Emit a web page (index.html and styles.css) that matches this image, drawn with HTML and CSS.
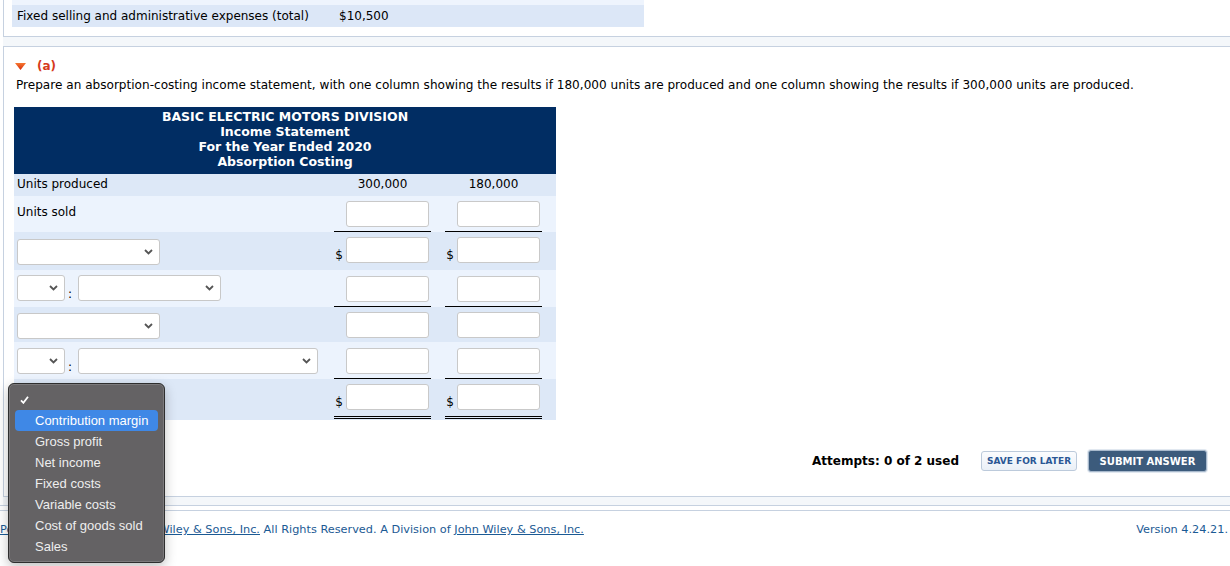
FILE: index.html
```html
<!DOCTYPE html>
<html lang="en">
<head>
<meta charset="utf-8">
<title>Absorption Costing</title>
<link rel="stylesheet" href="styles.css">
</head>
<body>
<div class="panel panel-given">
  <div class="given-prev"></div>
  <div class="given-row">
    <span class="given-label">Fixed selling and administrative expenses (total)</span>
    <span class="given-value">$10,500</span>
  </div>
</div>
<div class="band"></div>
<div class="panel panel-q">
  <div class="q-head">
    <svg class="caret" width="11" height="7" viewBox="0 0 11 7"><defs><linearGradient id="cg" x1="0" y1="0" x2="0" y2="1"><stop offset="0" stop-color="#f7772f"/><stop offset="1" stop-color="#d52c0c"/></linearGradient></defs><polygon points="0,0 11,0 5.5,7" fill="url(#cg)"/></svg>
    <span class="q-label">(a)</span>
  </div>
  <p class="q-text">Prepare an absorption-costing income statement, with one column showing the results if 180,000 units are produced and one column showing the results if 300,000 units are produced.</p>

  <div class="stmt">
    <div class="stmt-title">BASIC ELECTRIC MOTORS DIVISION<br>Income Statement<br>For the Year Ended 2020<br>Absorption Costing</div>

    <div class="srow dark r-produced">
      <div class="lab">Units produced</div>
      <div class="num">300,000</div>
      <div class="num">180,000</div>
    </div>

    <div class="srow light r-sold">
      <div class="lab">Units sold</div>
      <div class="val uline"><input type="text"></div>
      <div class="val uline"><input type="text"></div>
    </div>

    <div class="srow dark r3">
      <div class="lab"><div class="sel w143"><svg class="chev" width="9" height="6" viewBox="0 0 9 6"><path d="M1 1 L4.5 4.5 L8 1" fill="none" stroke="#555" stroke-width="1.8"/></svg></div></div>
      <div class="val"><span class="dollar">$</span><input type="text"></div>
      <div class="val"><span class="dollar">$</span><input type="text"></div>
    </div>

    <div class="srow light r4">
      <div class="lab">
        <div class="sel w48"><svg class="chev" width="9" height="6" viewBox="0 0 9 6"><path d="M1 1 L4.5 4.5 L8 1" fill="none" stroke="#555" stroke-width="1.8"/></svg></div>
        <span class="colon">:</span>
        <div class="sel w143"><svg class="chev" width="9" height="6" viewBox="0 0 9 6"><path d="M1 1 L4.5 4.5 L8 1" fill="none" stroke="#555" stroke-width="1.8"/></svg></div>
      </div>
      <div class="val uline"><input type="text"></div>
      <div class="val uline"><input type="text"></div>
    </div>

    <div class="srow dark r5">
      <div class="lab"><div class="sel w143"><svg class="chev" width="9" height="6" viewBox="0 0 9 6"><path d="M1 1 L4.5 4.5 L8 1" fill="none" stroke="#555" stroke-width="1.8"/></svg></div></div>
      <div class="val"><input type="text"></div>
      <div class="val"><input type="text"></div>
    </div>

    <div class="srow light r6">
      <div class="lab">
        <div class="sel w48"><svg class="chev" width="9" height="6" viewBox="0 0 9 6"><path d="M1 1 L4.5 4.5 L8 1" fill="none" stroke="#555" stroke-width="1.8"/></svg></div>
        <span class="colon">:</span>
        <div class="sel w240"><svg class="chev" width="9" height="6" viewBox="0 0 9 6"><path d="M1 1 L4.5 4.5 L8 1" fill="none" stroke="#555" stroke-width="1.8"/></svg></div>
      </div>
      <div class="val uline"><input type="text"></div>
      <div class="val uline"><input type="text"></div>
    </div>

    <div class="srow dark r7">
      <div class="lab"></div>
      <div class="val dline"><span class="dollar">$</span><input type="text"></div>
      <div class="val dline"><span class="dollar">$</span><input type="text"></div>
    </div>
  </div>

  <div class="actions">
    <span class="attempts">Attempts: 0 of 2 used</span>
    <button class="btn-save" type="button">SAVE FOR LATER</button>
    <button class="btn-submit" type="button">SUBMIT ANSWER</button>
  </div>
</div>
<div class="band band-bottom"></div>
<div class="footer-rule"></div>
<div class="footer">
  <span class="copy"><a class="flink">Policy</a><span class="fsep">|</span>© 2000-2021 <a class="flink">John Wiley &amp; Sons, Inc.</a> All Rights Reserved. A Division of <a class="flink">John Wiley &amp; Sons, Inc.</a></span>
  <span class="version">Version 4.24.21.</span>
</div>

<div class="popup">
  <div class="opt opt-check"><svg width="9" height="8" viewBox="0 0 9 8"><path d="M1 4.3 L3.4 6.8 L8 0.8" fill="none" stroke="#fff" stroke-width="1.8"/></svg></div>
  <div class="opt opt-active">Contribution margin</div>
  <div class="opt">Gross profit</div>
  <div class="opt">Net income</div>
  <div class="opt">Fixed costs</div>
  <div class="opt">Variable costs</div>
  <div class="opt">Cost of goods sold</div>
  <div class="opt">Sales</div>
</div>
</body>
</html>
```

FILE: styles.css
```css
html, body {
  margin: 0;
  padding: 0;
  background: #fff;
}
body {
  font-family: "DejaVu Sans", Verdana, sans-serif;
  font-size: 12px;
  color: #000;
  width: 1230px;
  height: 566px;
  overflow: hidden;
}

.panel {
  margin-left: 3px;
  border-left: 1px solid #c6d1e0;
  background: #fff;
}
.panel-given {
  padding-bottom: 9px;
  border-bottom: 1px solid #c6d1e0;
}
.given-prev {
  margin-left: 8px;
  width: 632px;
  height: 5px;
  background: #eef4fd;
}
.given-row {
  margin-left: 8px;
  width: 632px;
  height: 22px;
  background: #dce7f7;
  display: flex;
  align-items: center;
}
.given-label {
  padding-left: 5px;
  width: 322px;
}

.band {
  margin-left: 3px;
  height: 9px;
  background: #f4f7fa;
}
.band-bottom {
  height: 8px;
}

.panel-q {
  border-top: 1px solid #c6d1e0;
  border-bottom: 1px solid #c6d1e0;
  padding-top: 11px;
  padding-bottom: 24px;
}
.q-head {
  display: flex;
  align-items: center;
  height: 16px;
  padding-left: 11px;
}
.caret {
  display: block;
  margin-right: 11px;
}
.q-label {
  font-weight: bold;
  font-size: 12px;
  color: #d63a1c;
}
.q-text {
  margin: 3px 0 14px 12px;
  line-height: 16px;
  font-size: 12.08px;
}

.stmt {
  margin-left: 10px;
  width: 542px;
}
.stmt-title {
  box-sizing: border-box;
  height: 67px;
  padding-top: 2px;
  background: #012d63;
  color: #fff;
  font-weight: bold;
  font-size: 12.5px;
  text-align: center;
  line-height: 15px;
}
.srow {
  display: grid;
  grid-template-columns: 306px 97px 97px;
  column-gap: 14px;
  padding-right: 14px;
  box-sizing: border-box;
}
.dark { background: #dde8f7; }
.light { background: #ecf3fd; }

.lab {
  display: flex;
  align-items: flex-start;
  padding-left: 3px;
  line-height: 14px;
}
.num {
  text-align: center;
  line-height: 14px;
  padding-top: 3px;
}
.val {
  display: flex;
  align-items: flex-end;
  justify-content: flex-end;
  padding-right: 2px;
  padding-bottom: 4px;
}
.val input {
  box-sizing: border-box;
  width: 83px;
  height: 26px;
  margin: 0;
  padding: 0 4px;
  border: 1px solid #c9c9c9;
  border-radius: 3px;
  background: #fff;
  font: inherit;
}
.dollar {
  font-size: 12px;
  line-height: 14px;
  margin-right: 3px;
  margin-bottom: 1px;
}
.uline { border-bottom: 1px solid #000; }
.dline {
  border-bottom: 3px double #000;
  margin-bottom: 1px;
  padding-bottom: 6px;
}

.r-produced { height: 22px; }
.r-produced .lab { padding-top: 3px; }

.r-sold { height: 36px; }
.r-sold .lab { padding-top: 9px; }

.r3 { height: 38px; }
.r3 .lab { padding-top: 7px; }
.r3 .val { padding-bottom: 7px; }

.r4 { height: 37px; }
.r4 .lab { padding-top: 5px; }

.r5 { height: 35px; }
.r5 .lab { padding-top: 6px; }

.r6 { height: 37px; }
.r6 .lab { padding-top: 6px; }

.r7 { height: 41px; }

.sel {
  box-sizing: border-box;
  height: 26px;
  border: 1px solid #c8c8c8;
  border-radius: 3px;
  background: #fff;
  display: flex;
  align-items: center;
  justify-content: flex-end;
  padding-right: 6px;
}
.chev { display: block; }
.w143 { width: 143px; }
.w48 { width: 48px; }
.w240 { width: 240px; }
.colon {
  margin: 12px 6px 0 3px;
  line-height: 14px;
}

.actions {
  display: flex;
  justify-content: flex-end;
  align-items: center;
  height: 22px;
  margin-top: 30px;
  padding-right: 23px;
}
.attempts {
  font-weight: bold;
  font-size: 12px;
  margin-right: 22px;
}
.btn-save {
  box-sizing: border-box;
  height: 20px;
  width: 96px;
  padding: 0;
  margin-right: 11px;
  border: 1px solid #bccadb;
  border-radius: 3px;
  background: linear-gradient(#fbfcfe, #eaf0f7);
  color: #2b5795;
  font-family: "DejaVu Sans", Verdana, sans-serif;
  font-weight: bold;
  font-size: 9px;
}
.btn-submit {
  box-sizing: border-box;
  height: 22px;
  width: 119px;
  padding: 0;
  border: 1px solid #a8b9cc;
  border-radius: 3px;
  box-shadow: 0 0 0 1px #e1e8f0;
  background: #3c5b7c;
  color: #fff;
  font-family: "DejaVu Sans", Verdana, sans-serif;
  font-weight: bold;
  font-size: 10px;
}

.footer-rule {
  height: 4px;
  border-top: 1px solid #c6d1e0;
  border-bottom: 1px solid #c6d1e0;
}
.footer {
  display: flex;
  justify-content: space-between;
  padding-top: 11px;
  padding-right: 2px;
  font-size: 11.3px;
  line-height: 16px;
  color: #1b5a94;
}
.flink {
  color: #1b5a94;
  text-decoration: underline;
}
.fsep {
  margin: 0 7px;
}

.popup {
  position: absolute;
  left: 8px;
  top: 383px;
  width: 157px;
  height: 180px;
  box-sizing: border-box;
  padding-top: 5px;
  background: #646264;
  border: 1px solid #2e2e2e;
  border-radius: 6px;
  box-shadow: inset 0 0 0 1px #7c7a7c, 0 4px 12px rgba(0, 0, 0, 0.25);
  font-family: "Liberation Sans", Arial, sans-serif;
  font-size: 13px;
  color: #eeeeee;
}
.opt {
  height: 21px;
  line-height: 21px;
  margin: 0 6px;
  padding-left: 20px;
  border-radius: 4px;
  white-space: nowrap;
}
.opt-check {
  padding-left: 5px;
  display: flex;
  align-items: center;
}
.opt-check svg { display: block; }
.opt-active {
  background: #3f88e6;
  color: #fff;
}
```
